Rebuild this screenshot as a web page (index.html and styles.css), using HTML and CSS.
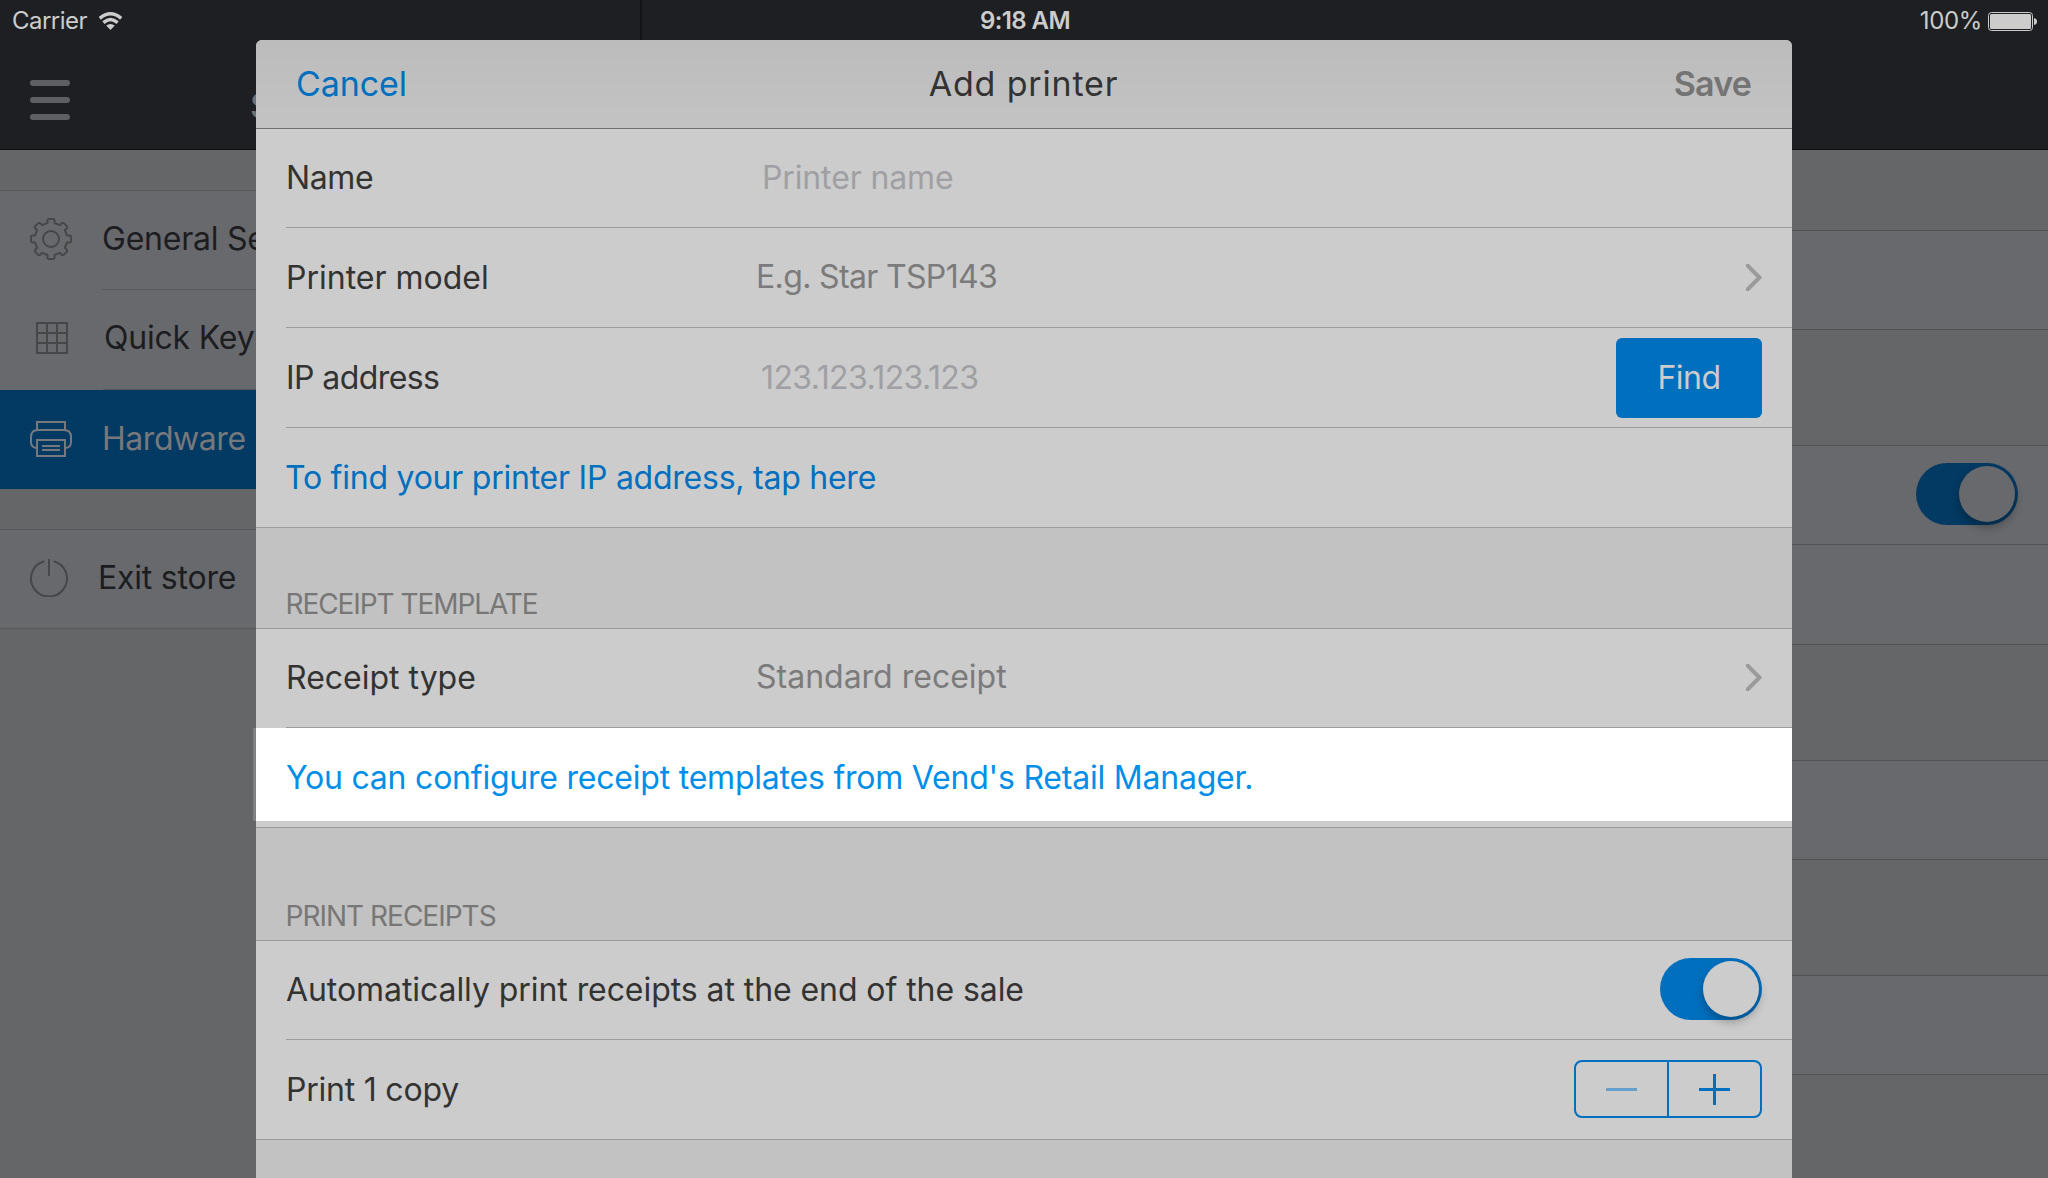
FILE: index.html
```html
<!DOCTYPE html>
<html lang="en">
<head>
<meta charset="utf-8">
<title>Add printer</title>
<link rel="stylesheet" href="styles.css">
</head>
<body>
<div class="screen">
  <div class="app">
    <aside class="sidebar">
      <header class="bar">
        <svg class="menu" width="40" height="40" viewBox="0 0 40 40"><path d="M3 3H37M3 20H37M3 37H37"/></svg>
        <h2 class="bar-title">Settings</h2>
      </header>
      <nav class="nav">
        <a class="nav-item">
          <svg class="icon" width="42" height="42" viewBox="-21 -21 42 42"><path d="M-3.5-16V-19L-2.5-20H2.5L3.5-19V-16L8.8-13.8L11-16.1H12.5L16.1-12.5V-11L13.8-8.8L16-3.5H19L20-2.5V2.5L19 3.5H16L13.8 8.8L16.1 11V12.5L12.5 16.1H11L8.8 13.8L3.5 16V19L2.5 20H-2.5L-3.5 19V16L-8.8 13.8L-11 16.1H-12.5L-16.1 12.5V11L-13.8 8.8L-16 3.5H-19L-20 2.5V-2.5L-19-3.5H-16L-13.8-8.8L-16.1-11V-12.5L-12.5-16.1H-11L-8.8-13.8Z"/><circle r="8"/></svg>
          <span class="nav-text general">General Settings</span>
        </a>
        <a class="nav-item">
          <svg class="icon grid-icon" width="32" height="32" viewBox="0 0 32 32"><path d="M1 1H31V31H1ZM11 1V31M21 1V31M1 11H31M1 21H31"/></svg>
          <span class="nav-text quick">Quick Keys</span>
        </a>
        <a class="nav-item active">
          <svg class="icon" width="42" height="36" viewBox="0 0 42 36"><path d="M7 9V1H35V9M6 27Q1 26 1 21V16Q1 9 8 9H34Q41 9 41 16V21Q41 26 36 27M7 19H35V35H7ZM12 25H30M12 29H30"/></svg>
          <span class="nav-text hardware">Hardware</span>
        </a>
      </nav>
      <nav class="nav exit">
        <a class="nav-item">
          <svg class="icon" width="38" height="38" viewBox="0 0 38 38"><path d="M14.3 2.2A18 18 0 1 0 23.7 2.2M19 0V17"/></svg>
          <span class="nav-text leave">Exit store</span>
        </a>
      </nav>
    </aside>
    <main class="pane">
      <header class="bar"></header>
      <div class="block first"><div class="line"></div></div>
      <div class="block second"><div class="line"><span class="toggle"><span class="knob"></span></span></div><div class="line tall"></div></div>
      <div class="block"><div class="line"></div></div>
      <div class="block"><div class="line"></div></div>
    </main>
  </div>

  <div class="status">
    <div class="status-left"><span class="carrier">Carrier</span>
      <svg width="26" height="19" viewBox="0 0 26 19"><path class="arc" d="M1.8 6.4Q12.5-2.8 23.2 6.4M5.4 10.6Q12.5 4.4 19.6 10.6"/><path class="dot" d="M12.5 18L8.2 13.6Q12.5 10.2 16.8 13.6Z"/></svg>
    </div>
    <div class="clock">9:18 AM</div>
    <div class="status-right"><span class="percent">100%</span>
      <svg width="50" height="19" viewBox="0 0 50 19"><rect class="case" x=".5" y=".5" width="44" height="18" rx="3"/><rect class="dot" x="2" y="2" width="41" height="15" rx="1.5"/><path class="dot" d="M46 6Q49 6.500 49 9.500Q49 12.500 46 13Z"/></svg>
    </div>
  </div>

  <section class="modal">
    <header class="modal-head">
      <a class="cancel">Cancel</a>
      <h1 class="modal-title">Add printer</h1>
      <a class="save">Save</a>
    </header>
    <div class="row short"><div class="cell"><label class="label name">Name</label><span class="placeholder">Printer name</span></div></div>
    <div class="row"><div class="cell"><label class="label">Printer model</label><span class="value model">E.g. Star TSP143</span>
      <svg class="chevron" width="16" height="27" viewBox="0 0 16 27"><path d="M1.500 1.500L13.500 13.500L1.500 25.500"/></svg></div></div>
    <div class="row"><div class="cell"><label class="label ip">IP address</label><span class="placeholder digits">123.123.123.123</span><button class="find">Find</button></div></div>
    <div class="row last"><div class="cell"><a class="link find-link">To find your printer IP address, tap here</a></div></div>
    <h3 class="group template">RECEIPT TEMPLATE</h3>
    <div class="row short"><div class="cell"><label class="label">Receipt type</label><span class="value">Standard receipt</span>
      <svg class="chevron" width="16" height="27" viewBox="0 0 16 27"><path d="M1.500 1.500L13.500 13.500L1.500 25.500"/></svg></div></div>
    <div class="row last lit"><div class="cell"><a class="link">You can configure receipt templates from Vend's Retail Manager.</a></div></div>
    <h3 class="group receipts">PRINT RECEIPTS</h3>
    <div class="row short"><div class="cell"><span class="label auto">Automatically print receipts at the end of the sale</span><span class="toggle"><span class="knob"></span></span></div></div>
    <div class="row last"><div class="cell"><span class="label copies">Print 1 copy</span>
      <div class="stepper"><button class="step minus"></button><button class="step plus"></button></div></div></div>
  </section>
</div>
</body>
</html>
```
FILE: styles.css
```css
* { box-sizing: border-box; }
body { margin: 0; font-family: Inter, "Liberation Sans", sans-serif; font-size: 32px; line-height: 40px; }
h1, h2, h3 { margin: 0; font-weight: 400; }
svg { display: block; flex: none; }
path, rect, circle { fill: none; }
.screen { position: relative; width: 2048px; height: 1178px; overflow: hidden; background: #656667; }

.app { display: grid; grid-template-columns: 640px 1fr; height: 100%; }
.bar { height: 150px; display: flex; align-items: center; background: #1e1f23; border-bottom: 1px solid #101113; }
.sidebar .bar { padding: 51px 30px 0; }
.menu path { stroke: #5e5f63; stroke-width: 6; stroke-linecap: round; }
.bar-title { width: 8px; overflow: hidden; margin: 12px 0 0 180px; font-size: 34px; font-weight: 500; color: #707175; }
.pane .bar { box-shadow: inset 2px 0 #121317; }

.nav { margin-top: 40px; border-top: 1px solid #57585b; }
.nav-item { display: flex; align-items: center; height: 100px; padding: 0 0 2px 30px; background: #68696d; color: #1c1d21; }
.nav-item:first-child { height: 98px; }
.nav-item + .nav-item { background: linear-gradient(#57585b, #57585b) 102px 0 / 100% 1px no-repeat #68696d; }
.nav-item + .nav-item.active { background: #033a63; color: #77787c; border-top: 1px solid; border-image: linear-gradient(90deg, #68696d 104px, #57585b 104px) 1; }
.icon path, .icon circle { stroke: #464749; stroke-width: 2; stroke-linejoin: round; }
.grid-icon { margin: 0 4px 0 6px; }
.grid-icon path { stroke-linejoin: miter; }
.active .icon path { stroke: #77787c; stroke-linejoin: miter; }
.nav-text { margin-left: 30px; white-space: nowrap; }
.general { letter-spacing: -.23px; }
.quick { margin-left: 32px; letter-spacing: -.2px; }
.hardware { letter-spacing: -.45px; }
.leave { letter-spacing: -.22px; }
.exit { margin-top: 40px; border-bottom: 1px solid #57585b; }

.block { margin-top: 115px; border-top: 1px solid #515256; }
.block.first { margin-top: 80px; }
.line { height: 99px; display: flex; justify-content: flex-end; align-items: center; padding-right: 30px; background: #68696d; border-bottom: 1px solid #515256; }
.line.tall { height: 100px; }
.pane .toggle { background: #033a63; margin-top: -2px; }
.pane .knob { background: #68696d; box-shadow: 0 5px 10px rgba(0,0,0,.3); }

.status { position: absolute; inset: 0 0 auto; height: 40px; display: grid; grid-template-columns: 1fr auto 1fr; align-items: center; font-size: 24px; line-height: 40px; padding: 1px 10px 0 12px; color: #ccc; }
.status-left, .status-right { display: flex; align-items: center; }
.status-left { gap: 11px; }
.status-right { justify-content: flex-end; gap: 6px; }
.carrier { letter-spacing: -.52px; }
.clock { font-weight: 600; letter-spacing: -.62px; }
.percent { letter-spacing: -.35px; }
.arc { stroke: #ccc; stroke-width: 3.4; }
.case { stroke: #ccc; }
.dot { fill: #ccc; }

.modal { position: absolute; top: 40px; left: 256px; width: 1536px; height: 1138px; background: #c2c2c2; border-radius: 6px 6px 0 0; color: #333; }
.modal-head { height: 89px; display: grid; grid-template-columns: 1fr auto 1fr; align-items: center; padding: 0 41px 0 40px; font-size: 34px; background: linear-gradient(#bcbcbc, #c3c3c3); border-bottom: 1px solid #6f6f71; border-radius: 6px 6px 0 0; }
.cancel { color: #006fbe; letter-spacing: -.1px; }
.modal-title { font-size: 34px; letter-spacing: .83px; }
.save { justify-self: end; font-weight: 600; letter-spacing: -.8px; color: #747474; }

.row { position: relative; height: 100px; padding-left: 30px; background: #ccc; }
.cell { display: flex; align-items: center; height: 100%; padding: 1px 30px 0 0; border-bottom: 1px solid #9b9b9d; }
.row.short { height: 99px; }
.row.short .cell { padding: 0 30px 1px 0; }
.row.last { padding-left: 0; }
.row.last .cell { padding-left: 30px; }
.label { width: 472px; flex: none; }
.name { letter-spacing: -.37px; }
.ip { letter-spacing: -.58px; }
.auto { width: auto; letter-spacing: -.07px; }
.copies { letter-spacing: -.22px; }
.value { margin-top: -2px; margin-left: -2px; color: #7b7b7c; }
.model { letter-spacing: -.65px; }
.placeholder { margin-left: 4px; color: #9fa0a3; letter-spacing: -.13px; }
.digits { margin-left: 3px; letter-spacing: -.6px; }
.chevron { margin-left: auto; margin-top: -1px; }
.chevron path { stroke: #9b9b9e; stroke-width: 4; stroke-linecap: round; }
.find { margin-left: auto; width: 146px; height: 80px; border: 0; border-radius: 6px; background: #006fbe; color: #ccc; font: inherit; letter-spacing: -.52px; }
.link { color: #006fbe; letter-spacing: -.22px; }
.find-link { margin-left: -1px; letter-spacing: -.24px; }
.lit::before { content: ""; position: absolute; left: -3px; top: 0; width: 1539px; height: 93px; background: linear-gradient(90deg, #7f8082 3px, #fff 3px); }
.lit .link { position: relative; color: #008fe8; }

.group { display: flex; align-items: flex-end; height: 101px; padding: 0 0 4px 29.500px; font-size: 28px; border-bottom: 1px solid #9b9b9d; color: #777; }
.template { letter-spacing: -1.07px; }
.receipts { height: 113px; letter-spacing: -.99px; }

.toggle { margin-left: auto; margin-top: -1px; flex: none; display: flex; justify-content: flex-end; width: 102px; height: 62px; padding: 3px; border-radius: 31px; background: #006fbe; }
.knob { width: 56px; height: 56px; border-radius: 50%; background: #ccc; box-shadow: 0 5px 10px rgba(0,0,0,.28); }
.stepper { margin-left: auto; margin-top: -2px; display: flex; width: 188px; height: 58px; border: 2px solid #006fbe; border-radius: 8px; }
.step { flex: 1; padding: 0; border: 0; background: linear-gradient(#669fca, #669fca) 50% 50% / 31px 3px no-repeat; }
.step + .step { border-left: 2px solid #006fbe; background: linear-gradient(#006fbe, #006fbe) 50% 50% / 31px 3px no-repeat, linear-gradient(#006fbe, #006fbe) 50% 50% / 3px 31px no-repeat; }
```
